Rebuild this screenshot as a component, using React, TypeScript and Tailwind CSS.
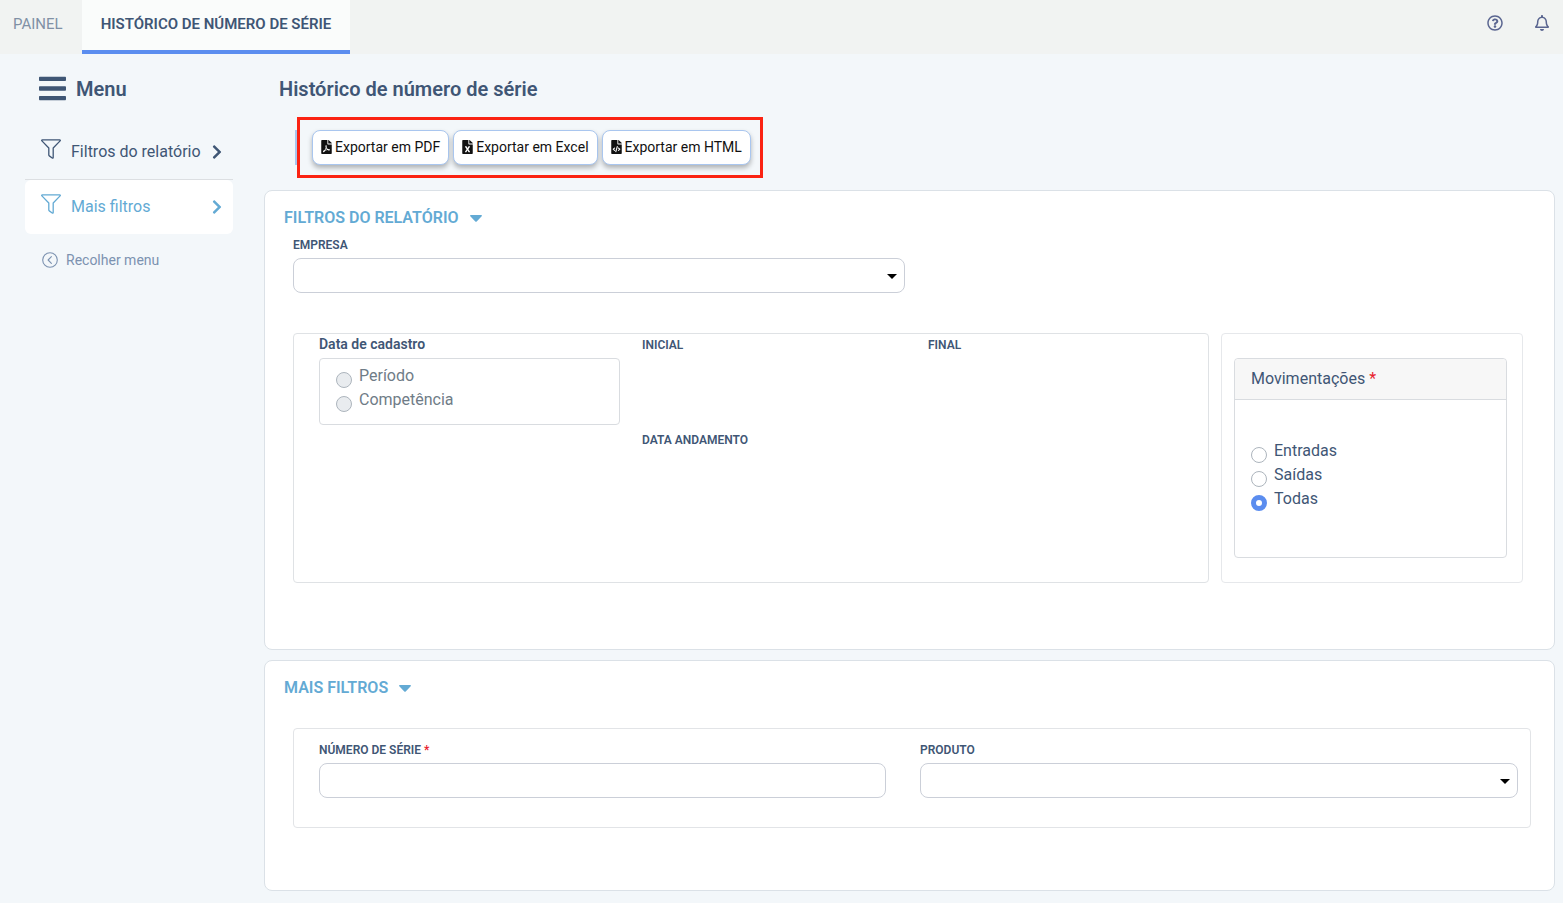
import React, { useState } from "react";
import { FaBars, FaChevronRight, FaFileCode, FaFileExcel, FaFilePdf, FaRegBell, FaRegQuestionCircle } from "react-icons/fa";

function FunnelIcon() {
  return (
    <svg width="20" height="20" viewBox="0 0 20 20" fill="none" stroke="currentColor" strokeWidth="1.3" strokeLinejoin="round" aria-hidden="true">
      <path d="M1.3.8h17.4c.6 0 .8.7.4 1.1L12.2 9v9.4c0 .7-.5.9-1 .6L8.300 16.900c-.3-.2-.5-.5-.5-.9V9L.9 1.900C.5 1.500.7.8 1.300.8Z" />
    </svg>
  );
}

function CircleBackIcon() {
  return (
    <svg width="16" height="16" viewBox="0 0 16 16" fill="none" stroke="currentColor" strokeWidth="1.1" aria-hidden="true">
      <circle cx="8" cy="8" r="7.300" />
      <path d="M9.400 4.600 6.100 8l3.300 3.400" strokeLinecap="round" strokeLinejoin="round" />
    </svg>
  );
}

function MenuLink({ href, label, active }: { href: string; label: string; active?: boolean }) {
  const tone = active ? "rounded-md bg-white text-[#63aad4]" : "border-b border-[#dcdfe2] text-[#3f5675]";
  return (
    <a href={href} className={`flex h-[54px] items-center px-4 pb-px text-base leading-6 ${tone}`}>
      <span className="-mt-1.5">
        <FunnelIcon />
      </span>
      <span className="ml-2.5 flex-1 whitespace-nowrap">{label}</span>
      <FaChevronRight size={16} className="-mr-2" />
    </a>
  );
}

function ExportButton({ icon, label }: { icon: React.ReactNode; label: string }) {
  return (
    <button
      type="button"
      className="flex h-[35px] items-center gap-[3px] rounded-lg border border-[#a9c6ef] bg-white px-2 pb-0.5 text-sm whitespace-nowrap text-[#111] shadow-[0_3px_5px_rgba(0,0,0,0.28)]"
    >
      {icon}
      {label}
    </button>
  );
}

function Required() {
  return <span className="text-[#e8222e]">*</span>;
}

const fieldClass = "block h-[35px] w-full rounded-lg border border-[#cbcfd8] bg-white px-3 text-sm text-[#3f5675]";
const labelClass = "mb-[5px] block text-xs leading-4 font-semibold uppercase";

function SelectField({ id, label }: { id: string; label: string }) {
  return (
    <div>
      <label htmlFor={id} className={labelClass}>
        {label}
      </label>
      <div className="relative">
        <select id={id} className={`${fieldClass} appearance-none`} defaultValue="">
          <option value="" />
        </select>
        <svg className="pointer-events-none absolute top-4 right-2" width="10" height="5" viewBox="0 0 10 5" aria-hidden="true">
          <path d="M0 0h10L5 5Z" fill="#000" />
        </svg>
      </div>
    </div>
  );
}

function Radio({
  name,
  label,
  disabled,
  checked,
  onChange,
}: {
  name: string;
  label: string;
  disabled?: boolean;
  checked: boolean;
  onChange?: () => void;
}) {
  return (
    <label className={`flex h-6 items-end gap-[7px] text-base leading-6 ${disabled ? "text-[#6f7c87]" : ""}`}>
      <input
        type="radio"
        name={name}
        checked={checked}
        disabled={disabled}
        onChange={onChange ?? (() => undefined)}
        className="size-4 appearance-none rounded-full border border-[#adb5bd] bg-white checked:border-[5px] checked:border-[#5b8def] disabled:bg-[#e9ecef]"
      />
      {label}
    </label>
  );
}

function Section({ id, title, className, children }: { id: string; title: string; className: string; children: React.ReactNode }) {
  const [open, setOpen] = useState(true);
  return (
    <section id={id} className={`rounded-lg border border-[#dbe1e7] bg-white pt-[15px] pr-[23px] pl-7 ${className}`}>
      <h2 className="-ml-[9px] text-base leading-6 font-semibold text-[#63aad4] uppercase">
        <button type="button" aria-expanded={open} onClick={() => setOpen(!open)} className="flex items-center gap-[11px] uppercase">
          {title}
          <svg width="12" height="7" viewBox="0 0 12 7" aria-hidden="true">
            <path d="M.8 0h10.400c.7 0 1 .8.5 1.300L6.700 6.500a1 1 0 0 1-1.400 0L.3 1.300C-.2.8.1 0 .8 0Z" fill="currentColor" />
          </svg>
        </button>
      </h2>
      {open && children}
    </section>
  );
}

const movements = ["Entradas", "Saídas", "Todas"];

export default function App() {
  const [movement, setMovement] = useState("Todas");
  return (
    <div className="min-h-screen bg-[#f3f7fa] font-[Roboto,sans-serif] text-[#3f5675]">
      <header className="flex h-[54px] items-stretch bg-[#f1f3f2]">
        <nav className="flex text-[15px] leading-5 uppercase">
          <a href="#painel" className="pt-3.5 pr-[19px] pl-[13px] text-[#8090a5]">
            Painel
          </a>
          <a href="#historico" className="border-b-4 border-[#5b8def] bg-[#fafcfb] px-[19px] pt-3.5 font-semibold">
            Histórico de número de série
          </a>
        </nav>
        <div className="ml-auto flex items-start gap-[31px] pt-[15px] pr-[13px] text-[#5a6590]">
          <button type="button" aria-label="Ajuda">
            <FaRegQuestionCircle size={16} />
          </button>
          <button type="button" aria-label="Notificações">
            <FaRegBell size={16} />
          </button>
        </div>
      </header>

      <div className="flex items-start pr-2 pb-3 pl-[25px]">
        <aside className="mr-[31px] w-52 shrink-0 pt-5">
          <div className="flex h-[30px] items-center gap-2.5 pl-3.5 text-xl font-semibold">
            <FaBars size={31} className="-mt-0.5 w-[27px]" />
            Menu
          </div>
          <nav className="mt-[22px]">
            <MenuLink href="#filtros" label="Filtros do relatório" />
            <MenuLink href="#mais" label="Mais filtros" active />
          </nav>
          <button type="button" className="mt-4 flex items-center gap-2 pl-[17px] text-sm leading-5 text-[#7c92b0]">
            <CircleBackIcon />
            Recolher menu
          </button>
        </aside>

        <main className="min-w-0 flex-1">
          <h1 className="pt-5 pl-[15px] text-xl leading-[30px] font-semibold">Histórico de número de série</h1>
          <div className="mt-[13px] flex items-center pl-[31px]">
            <span className="h-[35px] w-0.5 bg-[#a9c6ef]" />
            <div className="flex gap-1 border-[3px] border-[#fb2312] py-[10px] pr-[9px] pl-3">
              <ExportButton icon={<FaFilePdf size={14} className="w-[11px]" />} label="Exportar em PDF" />
              <ExportButton icon={<FaFileExcel size={14} className="w-[11px]" />} label="Exportar em Excel" />
              <ExportButton icon={<FaFileCode size={14} className="w-[11px]" />} label="Exportar em HTML" />
            </div>
          </div>

          <Section id="filtros" title="Filtros do relatório" className="mt-3 pb-[66px]">
            <div className="mt-[7px] grid grid-cols-2 gap-3.5">
              <SelectField id="empresa" label="Empresa" />
            </div>
            <div className="mt-10 mr-2 flex gap-3">
              <div className="grid flex-1 grid-cols-[301fr_264fr_264fr] gap-[22px] rounded border border-[#dfe2e5] pr-4 pl-[25px]">
                <fieldset>
                  <legend className="block text-sm leading-5 font-semibold">Data de cadastro</legend>
                  <div className="mt-1 h-[67px] rounded border border-[#d9dce0] px-4 pt-[5px]">
                    <Radio name="cadastro" label="Período" disabled checked={false} />
                    <Radio name="cadastro" label="Competência" disabled checked={false} />
                  </div>
                </fieldset>
                <div className="pt-[3px]">
                  <p className="text-xs leading-4 font-semibold uppercase">Inicial</p>
                  <p className="mt-[79px] text-xs leading-4 font-semibold uppercase">Data andamento</p>
                </div>
                <div className="pt-[3px]">
                  <p className="text-xs leading-4 font-semibold uppercase">Final</p>
                </div>
              </div>
              <div className="w-[302px] rounded border border-[#e6e8eb] pt-6 pr-[15px] pb-6 pl-3">
                <div role="radiogroup" aria-labelledby="mov" className="h-[200px] rounded border border-[#d9dce0]">
                  <div id="mov" className="h-[41px] rounded-t border-b border-[#d9dce0] bg-[#f7f7f7] px-4 pt-2 leading-6">
                    Movimentações <Required />
                  </div>
                  <div className="px-4 pt-[39px]">
                    {movements.map((m) => (
                      <Radio key={m} name="movimentacao" label={m} checked={movement === m} onChange={() => setMovement(m)} />
                    ))}
                  </div>
                </div>
              </div>
            </div>
          </Section>

          <Section id="mais" title="Mais filtros" className="mt-[10px] pb-[62px]">
            <div className="mt-7 grid h-[100px] grid-cols-[567fr_598fr] gap-[34px] rounded border border-[#e2e4e7] pt-[13px] pr-3 pl-[25px]">
              <div>
                <label htmlFor="serie" className={labelClass}>
                  Número de série <Required />
                </label>
                <input id="serie" type="text" className={fieldClass} />
              </div>
              <SelectField id="produto" label="Produto" />
            </div>
          </Section>
        </main>
      </div>
    </div>
  );
}
